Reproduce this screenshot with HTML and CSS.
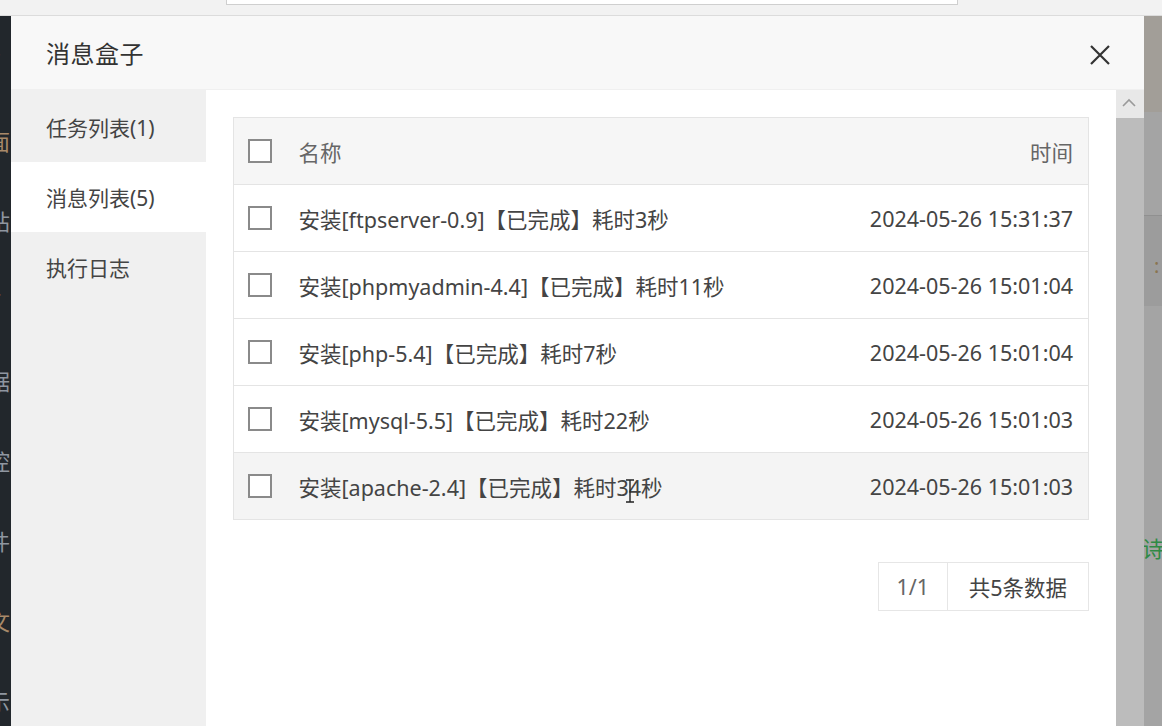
FILE: index.html
```html
<!DOCTYPE html>
<html lang="zh-CN">
<head>
<meta charset="utf-8">
<title>消息盒子</title>
<link rel="stylesheet" href="styles.css">
</head>
<body>
<div class="topbar"><div class="search"></div></div>
<div class="main">
  <div class="darkstrip">
    <span class="frag f-red">7</span>
    <span class="frag f-brown">面</span>
    <span class="frag f-gray">站</span>
    <span class="frag f-brown">T</span>
    <span class="frag f-gray">据</span>
    <span class="frag f-gray">控</span>
    <span class="frag f-gray">件</span>
    <span class="frag f-brown">文</span>
    <span class="frag f-gray">示</span>
  </div>
  <div class="modal">
    <div class="modal-head">
      <span class="modal-title">消息盒子</span>
      <svg class="close" width="22" height="22" viewBox="0 0 22 22"><path d="M2 2 L20 20 M20 2 L2 20" stroke="#333" stroke-width="2.2" fill="none"/></svg>
    </div>
    <div class="modal-body">
      <ul class="side">
        <li class="side-item">任务列表(1)</li>
        <li class="side-item active">消息列表(5)</li>
        <li class="side-item">执行日志</li>
      </ul>
      <div class="content">
        <table class="tbl">
          <thead>
            <tr><th class="c-chk"><span class="chk"></span></th><th class="c-name">名称</th><th class="c-time">时间</th></tr>
          </thead>
          <tbody>
            <tr><td class="c-chk"><span class="chk"></span></td><td class="c-name">安装[ftpserver-0.9]【已完成】耗时3秒</td><td class="c-time">2024-05-26 15:31:37</td></tr>
            <tr><td class="c-chk"><span class="chk"></span></td><td class="c-name">安装[phpmyadmin-4.4]【已完成】耗时11秒</td><td class="c-time">2024-05-26 15:01:04</td></tr>
            <tr><td class="c-chk"><span class="chk"></span></td><td class="c-name">安装[php-5.4]【已完成】耗时7秒</td><td class="c-time">2024-05-26 15:01:04</td></tr>
            <tr><td class="c-chk"><span class="chk"></span></td><td class="c-name">安装[mysql-5.5]【已完成】耗时22秒</td><td class="c-time">2024-05-26 15:01:03</td></tr>
            <tr class="hover"><td class="c-chk"><span class="chk"></span></td><td class="c-name"><span class="cursor-host">安装[apache-2.4]【已完成】耗时34秒<svg class="ibeam" width="12" height="24" viewBox="0 0 12 24"><path d="M2 1 H10 M6 1 V23 M2 23 H10" stroke="#222" stroke-width="1.4" fill="none"/></svg></span></td><td class="c-time">2024-05-26 15:01:03</td></tr>
          </tbody>
        </table>
        <div class="pager">
          <span class="pg-cell pg-num">1/1</span>
          <span class="pg-cell">共5条数据</span>
        </div>
      </div>
      <div class="scrollbar">
        <div class="sb-up"><svg width="16" height="10" viewBox="0 0 16 10"><path d="M2 8 L8 2 L14 8" stroke="#9a9a9a" stroke-width="1.6" fill="none"/></svg></div>
        <div class="sb-thumb"></div>
      </div>
    </div>
  </div>
  <div class="rightstrip">
    <div class="rs-top"></div>
    <div class="rs-gap1"></div>
    <div class="rs-band"><span class="rs-frag">:</span></div>
    <div class="rs-gap2"></div>
    <div class="rs-green">诗</div>
  </div>
</div>
</body>
</html>
```

FILE: styles.css
```css
* { box-sizing: border-box; }
html, body { margin: 0; padding: 0; }
body {
  width: 1162px;
  height: 726px;
  overflow: hidden;
  background: #f1f1f1;
  font-family: "Noto Sans", "Noto Sans CJK SC", sans-serif;
  color: #333;
}
.topbar {
  height: 16px;
  background: #f2f2f2;
  border-bottom: 1px solid #dcdcdc;
  padding-left: 226px;
}
.search {
  width: 732px;
  height: 5px;
  background: #fff;
  border: 1px solid #cfcfcf;
  border-top: none;
}
.main {
  display: flex;
  height: 710px;
}
.darkstrip {
  width: 11px;
  background: #22272c;
  overflow: hidden;
  display: flex;
  flex-direction: column;
  padding-top: 34px;
  gap: 58px;
}
.frag {
  display: block;
  font-size: 22px;
  line-height: 22px;
  margin-left: -12px;
  white-space: nowrap;
}
.f-red { color: #c0443a; }
.f-brown { color: #a88a6a; }
.f-gray { color: #8f96a0; }
.modal {
  width: 1133px;
  display: flex;
  flex-direction: column;
  background: #fff;
}
.modal-head {
  height: 74px;
  flex: none;
  background: #f8f8f8;
  border-bottom: 1px solid #f0f0f0;
  display: flex;
  align-items: center;
  justify-content: space-between;
  padding: 0 33px 0 35px;
}
.modal-title {
  font-size: 24px;
  color: #333;
  line-height: 1;
  margin-top: 2px;
  letter-spacing: 0.5px;
}
.close { display: block; margin-top: 4px; }
.modal-body {
  flex: 1;
  display: flex;
  min-height: 0;
}
.side {
  list-style: none;
  margin: 0;
  padding: 2px 0 0;
  width: 195px;
  flex: none;
  background: #f0f0f0;
}
.side-item {
  height: 70px;
  display: flex;
  align-items: center;
  padding-left: 35px;
  font-size: 21px;
  color: #444;
}
.side-item.active { background: #fff; }
.content {
  flex: 1;
  padding: 27px 27px 0;
  background: #fff;
}
.tbl {
  width: 856px;
  border-collapse: collapse;
  border: 1px solid #e4e4e4;
  font-size: 21.5px;
}
.tbl th, .tbl td {
  height: 67px;
  padding: 0;
  border-top: 1px solid #e4e4e4;
  border-bottom: 1px solid #e4e4e4;
  text-align: left;
  font-weight: normal;
  vertical-align: middle;
  white-space: nowrap;
}
.tbl thead th {
  background: #f6f6f6;
  color: #666;
}
.tbl td { color: #444; }
.tbl tr.hover td { background: #f4f4f4; }
.c-chk { width: 65px; padding-left: 14px !important; }
.c-time { text-align: right !important; padding-right: 15px !important; }
.chk {
  display: block;
  width: 24px;
  height: 24px;
  border: 2px solid #8a8a8a;
  background: #fff;
}
.cursor-host { position: relative; }
.ibeam {
  position: absolute;
  left: 325px;
  top: 6px;
}
.pager {
  display: flex;
  justify-content: flex-end;
  margin-top: 42px;
}
.pg-cell {
  height: 49px;
  display: flex;
  align-items: center;
  padding: 0 21px;
  border: 1px solid #e6e6e6;
  font-size: 21.5px;
  color: #444;
}
.pg-num {
  width: 69px;
  justify-content: center;
  padding: 0;
  border-right: none;
  color: #666;
}
.scrollbar {
  width: 28px;
  flex: none;
  display: flex;
  flex-direction: column;
  background: #bcbcbc;
}
.sb-up {
  height: 28px;
  background: #e8e8e8;
  display: flex;
  align-items: center;
  justify-content: center;
}
.sb-up svg { display: block; margin-left: -2px; margin-top: -2px; }
.sb-thumb { flex: 1; background: #bcbcbc; }
.rightstrip {
  flex: 1;
  background: #a4a4a4;
  display: flex;
  flex-direction: column;
  overflow: hidden;
}
.rs-top { height: 96px; background: #a29e98; }
.rs-gap1 { height: 103px; }
.rs-band {
  height: 91px;
  background: #9c9c9c;
  border-top: 1px solid #909090;
  position: relative;
}
.rs-frag {
  position: absolute;
  left: 10px;
  top: 36px;
  color: #8a7450;
  font-size: 20px;
}
.rs-gap2 { height: 230px; }
.rs-green {
  color: #2f8a45;
  font-size: 22px;
  line-height: 24px;
  margin-left: -2px;
}
```
